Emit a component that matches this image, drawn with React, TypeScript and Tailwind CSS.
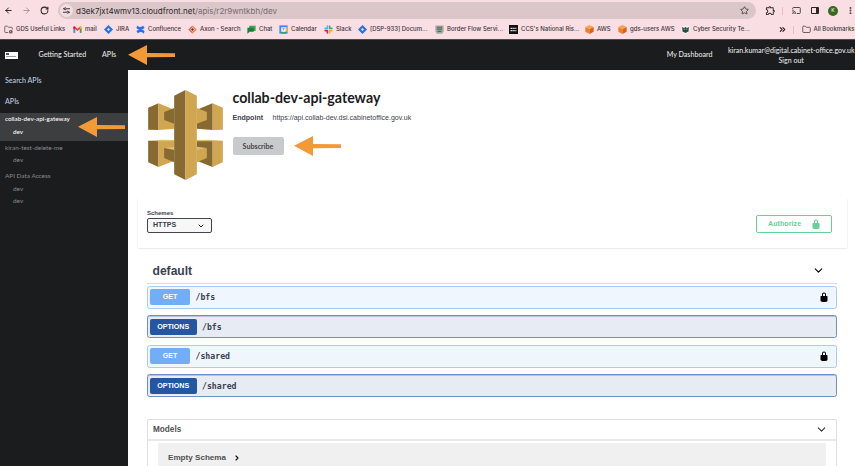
import React from "react";
import { ArrowLeft, ArrowRight, RotateCw, Star, Cast, MoreVertical, ChevronDown, ChevronRight, Folder, FolderCog, ChevronsRight } from "lucide-react";
import { MdOutlineExtension } from "react-icons/md";

const ui = "font-['Inter','Liberation_Sans',sans-serif]";
const lato = "font-['Lato','Liberation_Sans',sans-serif]";
const sans = "font-['Liberation_Sans',Arial,sans-serif]";
const mono = "font-['DejaVu_Sans_Mono','Liberation_Mono',monospace]";

const Gmail = () => (
  <svg viewBox="0 0 24 24" className="size-[9px]" fill="none" strokeWidth="5">
    <path d="M3.5 21V8" stroke="#4285f4" />
    <path d="M20.500 21V8" stroke="#34a853" />
    <path d="M2.500 5 12 13l9.500-8" stroke="#ea4335" />
    <path d="M3.500 10V4" stroke="#c5221f" />
    <path d="M20.500 10V4" stroke="#fbbc04" />
  </svg>
);
const Jira = () => (
  <svg viewBox="0 0 24 24" className="size-[9px]">
    <path d="M12 0 24 12 12 24 0 12z" fill="#2373ee" />
    <path d="M12 8l4 4-4 4-4-4z" fill="#f9dee3" />
  </svg>
);
const Confluence = () => (
  <svg viewBox="0 0 24 24" className="size-[9px]">
    <path d="M1 7 4 1c5 6 8 5 15 1l4 6C13 15 6 14 1 7z" fill="#2373ee" />
    <path d="M23 17l-3 6c-5-6-8-5-15-1l-4-6c10-7 17-6 22 1z" fill="#2373ee" />
  </svg>
);
const Axon = () => (
  <svg viewBox="0 0 24 24" className="size-[9px]">
    <path d="M12 1 1 12l11 11v-5l-6-6 6-6z" fill="#f15a29" />
    <path d="M12 1l11 11-11 11v-5l6-6-6-6z" fill="#f58220" />
    <path d="M12 8l4 4-4 4-4-4z" fill="#5a2a82" />
  </svg>
);
const Chat = () => (
  <svg viewBox="0 0 24 24" className="size-[9px]">
    <path d="M6 2h17v14H6z" fill="#34a853" />
    <path d="M1 7h17v11H7l-6 5z" fill="#188038" />
  </svg>
);
const Calendar = () => (
  <svg viewBox="0 0 24 24" className="size-[9px]">
    <path d="M1 1h22v22H1z" fill="#4285f4" />
    <path d="M18 6h5v12h-5z" fill="#fbbc04" />
    <path d="M6 18h12v5H6z" fill="#34a853" />
    <path d="M6 6h12v12H6z" fill="#fff" />
    <path d="M9 9h5l-3 6" stroke="#4285f4" strokeWidth="2" fill="none" />
  </svg>
);
const Slack = () => (
  <svg viewBox="0 0 24 24" className="size-[9px]" strokeWidth="4.4" strokeLinecap="round">
    <path d="M9 3v6M3 9h6" stroke="#36c5f0" />
    <path d="M15 3v6M15 9h6" stroke="#2eb67d" />
    <path d="M15 15v6M15 15h6" stroke="#ecb22e" />
    <path d="M9 15v6M3 15h6" stroke="#e01e5a" />
  </svg>
);
const Border = () => (
  <svg viewBox="0 0 24 24" className="size-[9px]">
    <path d="M1 1h22v16l-4 6H5l-4-6z" fill="#a3a9a6" />
    <path d="M5 6h14M5 11h14M7 17h10" stroke="#59655f" strokeWidth="3" />
  </svg>
);
const Ccs = () => (
  <svg viewBox="0 0 24 24" className="size-[9px]">
    <path d="M0 0h24v24H0z" fill="#111" />
    <path d="M4 9h16M4 15h16" stroke="#ddd" strokeWidth="3" strokeDasharray="4 1" />
  </svg>
);
const Aws = () => (
  <svg viewBox="0 0 24 24" className="size-[9px]">
    <path d="M12 0l11 5-11 6L1 5z" fill="#f9a54a" />
    <path d="M1 5l11 6v13L1 18z" fill="#ef7f22" />
    <path d="M23 5l-11 6v13l11-6z" fill="#d9601a" />
  </svg>
);
const Cyber = () => (
  <svg viewBox="0 0 24 24" className="size-[9px]">
    <circle cx="12" cy="12" r="11" fill="#f4f4f4" />
    <path d="M3 5l5 3 4-3 4 3 5-3-1 12-8 4-8-4z" fill="#2c4a44" />
    <path d="M7 11h4M13 11h4" stroke="#9fc4b8" strokeWidth="2" />
  </svg>
);

const bookmarks = [
  { t: "GDS Useful Links", w: "w-[69px]", i: <FolderCog className="size-[9px] text-[#55494c]" strokeWidth={2} /> },
  { t: "mail", w: "w-[31px]", i: <Gmail /> },
  { t: "JIRA", w: "w-[32px]", i: <Jira /> },
  { t: "Confluence", w: "w-[52px]", i: <Confluence /> },
  { t: "Axon - Search", w: "w-[59px]", i: <Axon /> },
  { t: "Chat", w: "w-[32px]", i: <Chat /> },
  { t: "Calendar", w: "w-[45px]", i: <Calendar /> },
  { t: "Slack", w: "w-[34px]", i: <Slack /> },
  { t: "[DSP-933] Docum...", w: "w-[77px]", i: <Jira /> },
  { t: "Border Flow Servi...", w: "w-[74px]", i: <Border /> },
  { t: "CCS's National Ris...", w: "w-[76px]", i: <Ccs /> },
  { t: "AWS", w: "w-[33px]", i: <Aws /> },
  { t: "gds-users AWS", w: "w-[63px]", i: <Aws /> },
  { t: "Cyber Security Te...", w: "w-[96.5px]", i: <Cyber /> },
];

function Browser() {
  return (
    <div className={`${ui} h-[40px] bg-[#f9dee3] text-[#40363a]`}>
      <div className="flex h-[21px] items-center pl-1">
        <ArrowLeft className="size-[9px] text-[#2c2427]" strokeWidth={2.6} />
        <ArrowRight className="ml-[9px] size-[9px] text-[#9b8a8e]" strokeWidth={2.2} />
        <RotateCw className="ml-[9px] size-[9px] text-[#2c2427]" strokeWidth={2.8} />
        <div className="ml-[9px] flex h-[17px] w-[698px] items-center rounded-full bg-[#dbc6c9] pr-[7px] pl-0.5">
          <span className="flex size-[13px] items-center justify-center rounded-full bg-[#f3dde1]">
            <svg viewBox="0 0 14 14" className="size-[7px]" fill="none" stroke="#40363a" strokeWidth="2">
              <path d="M0 3.500h3M7 3.500h7M0 10.500h7M11 10.500h3" />
              <circle cx="4.500" cy="3.500" r="2" />
              <circle cx="9.500" cy="10.500" r="2" />
            </svg>
          </span>
          <span className="ml-[3px] text-[8px] whitespace-nowrap text-[#7a6b6f]">
            <span className="text-[#2e2629]">d3ek7jxt4wmv13.cloudfront.net</span>/apis/r2r9wntkbh/dev
          </span>
          <Star className="ml-auto size-[9px]" strokeWidth={2.2} />
        </div>
        <MdOutlineExtension className="ml-[9px] size-[11px] text-[#2c2427]" />
        <span className="ml-[6px] h-[8px] w-px bg-[#f3b8c3]" />
        <Cast className="ml-[9px] size-[9px]" strokeWidth={2.4} />
        <span className="ml-[10px] h-[7px] w-[8px] rounded-[1px] border border-r-[3px] border-[#2c2427]" />
        <span className="ml-[9px] flex size-[10px] items-center justify-center rounded-full bg-[#38691e] text-[5px] text-white">K</span>
        <MoreVertical className="ml-[8px] size-[9px] shrink-0" strokeWidth={3} />
      </div>
      <div className="flex h-[18px] items-center pb-px pl-1 text-[5.98px] font-medium whitespace-nowrap">
        {bookmarks.map((b, n) => (
          <div key={n} className={`${b.w} flex shrink-0 items-center gap-[3px]`}>
            <span className="shrink-0">{b.i}</span>
            <span>{b.t}</span>
          </div>
        ))}
        <ChevronsRight className="size-[9px] shrink-0 text-[#2c2427]" strokeWidth={3} />
        <span className="ml-[6.5px] h-[8px] w-px bg-[#f3b8c3]" />
        <Folder className="ml-[7.5px] size-[9px] shrink-0" strokeWidth={2} />
        <span className="ml-[3px]">All Bookmarks</span>
      </div>
      <div className="h-px bg-[#4f474a]" />
    </div>
  );
}

function Arrow({ className }: { className: string }) {
  return (
    <svg viewBox="0 0 47 20" className={`absolute h-[20px] w-[47px] ${className}`}>
      <path d="M0 9.7 19 0v8l28 .2v3.8l-28 .2V20z" fill="#f29a38" />
    </svg>
  );
}

function Gateway() {
  return (
    <svg viewBox="0 0 224 270" className="h-[90px] w-[75px] shrink-0">
      <path d="M0 53 31 40V120L0 119z" fill="#876a32" />
      <path d="M31 40 78 59V116L31 120z" fill="#d0a650" />
      <path d="M224 53 193 40V120L224 119z" fill="#d0a650" />
      <path d="M193 40 146 59V116L193 120z" fill="#876a32" />
      <path d="M48 66 78 54V101L48 90z" fill="#876a32" />
      <path d="M176 66 146 54V101L176 90z" fill="#d0a650" />
      <path d="M0 152 31 153V231L0 217z" fill="#876a32" />
      <path d="M31 153 78 153V212L31 231z" fill="#d0a650" />
      <path d="M224 152 193 153V231L224 217z" fill="#d0a650" />
      <path d="M193 153 146 153V212L193 231z" fill="#876a32" />
      <path d="M0 152 40 149 78 150V154L31 154z" fill="#dcbd74" />
      <path d="M224 152 184 149 146 150V154L193 154z" fill="#dcbd74" />
      <path d="M48 174 78 170V182z" fill="#dcbd74" />
      <path d="M176 174 146 170V182z" fill="#dcbd74" />
      <path d="M48 174 78 180V217L48 204z" fill="#876a32" />
      <path d="M176 174 146 180V217L176 204z" fill="#d0a650" />
      <path d="M78 17 112 0V270L78 253z" fill="#876a32" />
      <path d="M146 17 112 0V270L146 253z" fill="#d0a650" />
    </svg>
  );
}

function Lock({ className }: { className: string }) {
  return (
    <svg viewBox="0 0 20 20" className={className} fill="currentColor">
      <path d="M15.8 8H14V5.6C14 2.7 12.7 1 10 1 7.2 1 6 2.7 6 5.6V8H4c-.6 0-1 .6-1 1.2V17c0 .9.7 1.9 1.5 2.2l1.3.4c.3.2.9.4 1.4.4h5.6c.5 0 1.1-.1 1.4-.3l1.3-.4c.8-.2 1.5-1.3 1.5-2.2V9.2c0-.6-.5-1.2-1.2-1.2zM12 8H8V5.2C8 3.7 8.7 3 10 3s2 .7 2 2.2z" />
    </svg>
  );
}

function Operation({ method, path }: { method: "GET" | "OPTIONS"; path: string }) {
  const get = method === "GET";
  return (
    <div className={`flex h-[22.6px] items-center rounded-[2.5px] border pl-[2px] pr-[7px] ${get ? "border-[#a9cbf6] bg-[#eff6fe]" : "border-[#6d8fc3] bg-[#e7ebf3] shadow-[inset_0_1px_0_#b4c3de]"}`}>
      <span className={`flex h-[16px] items-center justify-center rounded-[2px] pt-px text-[7.1px] font-bold text-white ${get ? "w-[40px] bg-[#72adf8]" : "w-[46.5px] bg-[#2556a1]"}`}>{method}</span>
      <span className={`${mono} ml-[5.5px] text-[8.2px] font-bold text-[#3b4151]`}>{path}</span>
      {get && <Lock className="ml-auto size-[10px] text-black" />}
    </div>
  );
}

export default function App() {
  return (
    <div className="relative h-[466px] w-[855px] overflow-hidden bg-white">
      <Browser />
      <header className={`${lato} flex h-[30px] items-center bg-[#1b1c1d] text-[7.1px] font-medium whitespace-nowrap text-[#e6e6e6]`}>
        <div className="ml-[5px] h-[7px] w-[13px] bg-white pt-px pl-px">
          <div className="h-[2px] w-[3px] bg-[#555]" />
          <div className="mt-px h-px w-[10px] bg-[#999]" />
        </div>
        <span className="ml-[20.5px] w-[63.5px] pt-px">Getting Started</span>
        <span className="pt-px">APIs</span>
        <span className="ml-auto pt-px">My Dashboard</span>
        <div className="mr-[0.5px] ml-[15.5px] text-center text-[7px] leading-[10.5px]">
          <div>kiran.kumar@digital.cabinet-office.gov.uk</div>
          <div>Sign out</div>
        </div>
      </header>
      <div className="flex h-[396px]">
        <aside className={`${lato} w-[127.5px] shrink-0 bg-[#1b1c1d] text-[6.4px] leading-[10px] text-[#8a8b8c]`}>
          <div className="pt-[5.5px] pl-[5px] text-[7.1px] font-medium text-[#bfcbe0]">Search APIs</div>
          <div className="pt-[11px] pl-[5px] text-[7.1px] font-medium text-[#bfcbe0]">APIs</div>
          <div className="mt-[6.5px] h-[28px] bg-[#3d3e3f] pt-[1px] pl-[5px] text-[6.3px] font-medium text-white">
            <div>collab-dev-api-gateway</div>
            <div className="mt-[2.5px] pl-[8px]">dev</div>
          </div>
          <div className="pt-[1.5px] pl-[5px]">
            <div>kiran-test-delete-me</div>
            <div className="mt-[2.5px] pl-[8px]">dev</div>
            <div className="mt-[5.5px]">API Data Access</div>
            <div className="mt-[3px] pl-[8px]">dev</div>
            <div className="mt-[2.5px] pl-[8px]">dev</div>
          </div>
        </aside>
        <main className={`${sans} w-[727.5px] text-[#3b4151]`}>
          <section className="flex h-[128px] gap-[10px] pt-[20px] pl-[20px]">
            <Gateway />
            <div>
              <h1 className={`${lato} text-[14.2px] leading-[15px] font-bold text-[#1b1c1d]`}>collab-dev-api-gateway</h1>
              <div className="mt-[8px] flex text-[7.05px] leading-[10px]">
                <b className="w-[40px]">Endpoint</b>
                <span className="whitespace-nowrap">https://api.collab-dev.dsi.cabinetoffice.gov.uk</span>
              </div>
              <button className={`${lato} mt-[14px] h-[18px] w-[51px] rounded-[2px] bg-[#c9cacb] pt-[2px] text-[7.15px] font-bold text-[#454647]`}>Subscribe</button>
            </div>
          </section>
          <section className="ml-[10px] flex h-[50px] w-[709px] justify-between pr-[15px] pl-[9.5px] shadow-[0_0.5px_1.5px_rgba(0,0,0,0.2)]">
            <div className="pt-[11px]">
              <div className="text-[6px] leading-[8px] font-bold">Schemes</div>
              <div className="mt-[1px] flex h-[15px] w-[65px] items-center justify-between rounded-[2px] border border-[#41444e] bg-[#f7f7f7] px-[5px] text-[7.1px] font-bold">
                HTTPS
                <ChevronDown className="mr-[1px] size-[8px] text-[#222]" strokeWidth={3} />
              </div>
            </div>
            <button className="mt-[17px] flex h-[18px] w-[76px] items-center justify-between rounded-[2px] border border-[#67cf98] pr-[10px] pl-[11.5px] text-[7.2px] font-bold text-[#67cf98]">
              <span className="pt-px">Authorize</span>
              <Lock className="size-[10px] text-[#67cf98]" />
            </button>
          </section>
          <section className="w-[709.5px] pl-[19.5px]">
            <div className="flex h-[35.5px] items-center justify-between border-b border-[#d9dadd] pt-[11px] pr-[12px] pl-[5.5px]">
              <h2 className="text-[12.1px] font-bold">default</h2>
              <ChevronDown className="size-[13px] text-black" strokeWidth={2} />
            </div>
            <div className="mt-[2.5px] flex flex-col gap-[6.9px]">
              <Operation method="GET" path="/bfs" />
              <Operation method="OPTIONS" path="/bfs" />
              <Operation method="GET" path="/shared" />
              <Operation method="OPTIONS" path="/shared" />
            </div>
            <div className="mt-[22px] h-[60px] rounded-[2px] border border-[#dddee0] text-[#505050]">
              <div className="flex h-[21px] items-center justify-between border-b-2 border-[#e8e8ea] pr-[8px] pl-[5px] text-[8.2px] font-bold">
                <span className="pt-px">Models</span>
                <ChevronDown className="size-[13px] text-[#333]" strokeWidth={2} />
              </div>
              <div className="mx-[10px] mt-[2px] flex h-[30px] items-center gap-[7px] bg-[#f0f0f0] pl-[10px] text-[8.1px] font-bold">
                <span className="pt-px">Empty Schema</span>
                <ChevronRight className="size-[8px] text-[#111]" strokeWidth={3.5} />
              </div>
            </div>
          </section>
        </main>
      </div>
      <Arrow className="top-[45px] left-[128px]" />
      <Arrow className="top-[117px] left-[78px]" />
      <Arrow className="top-[136px] left-[294px]" />
    </div>
  );
}
